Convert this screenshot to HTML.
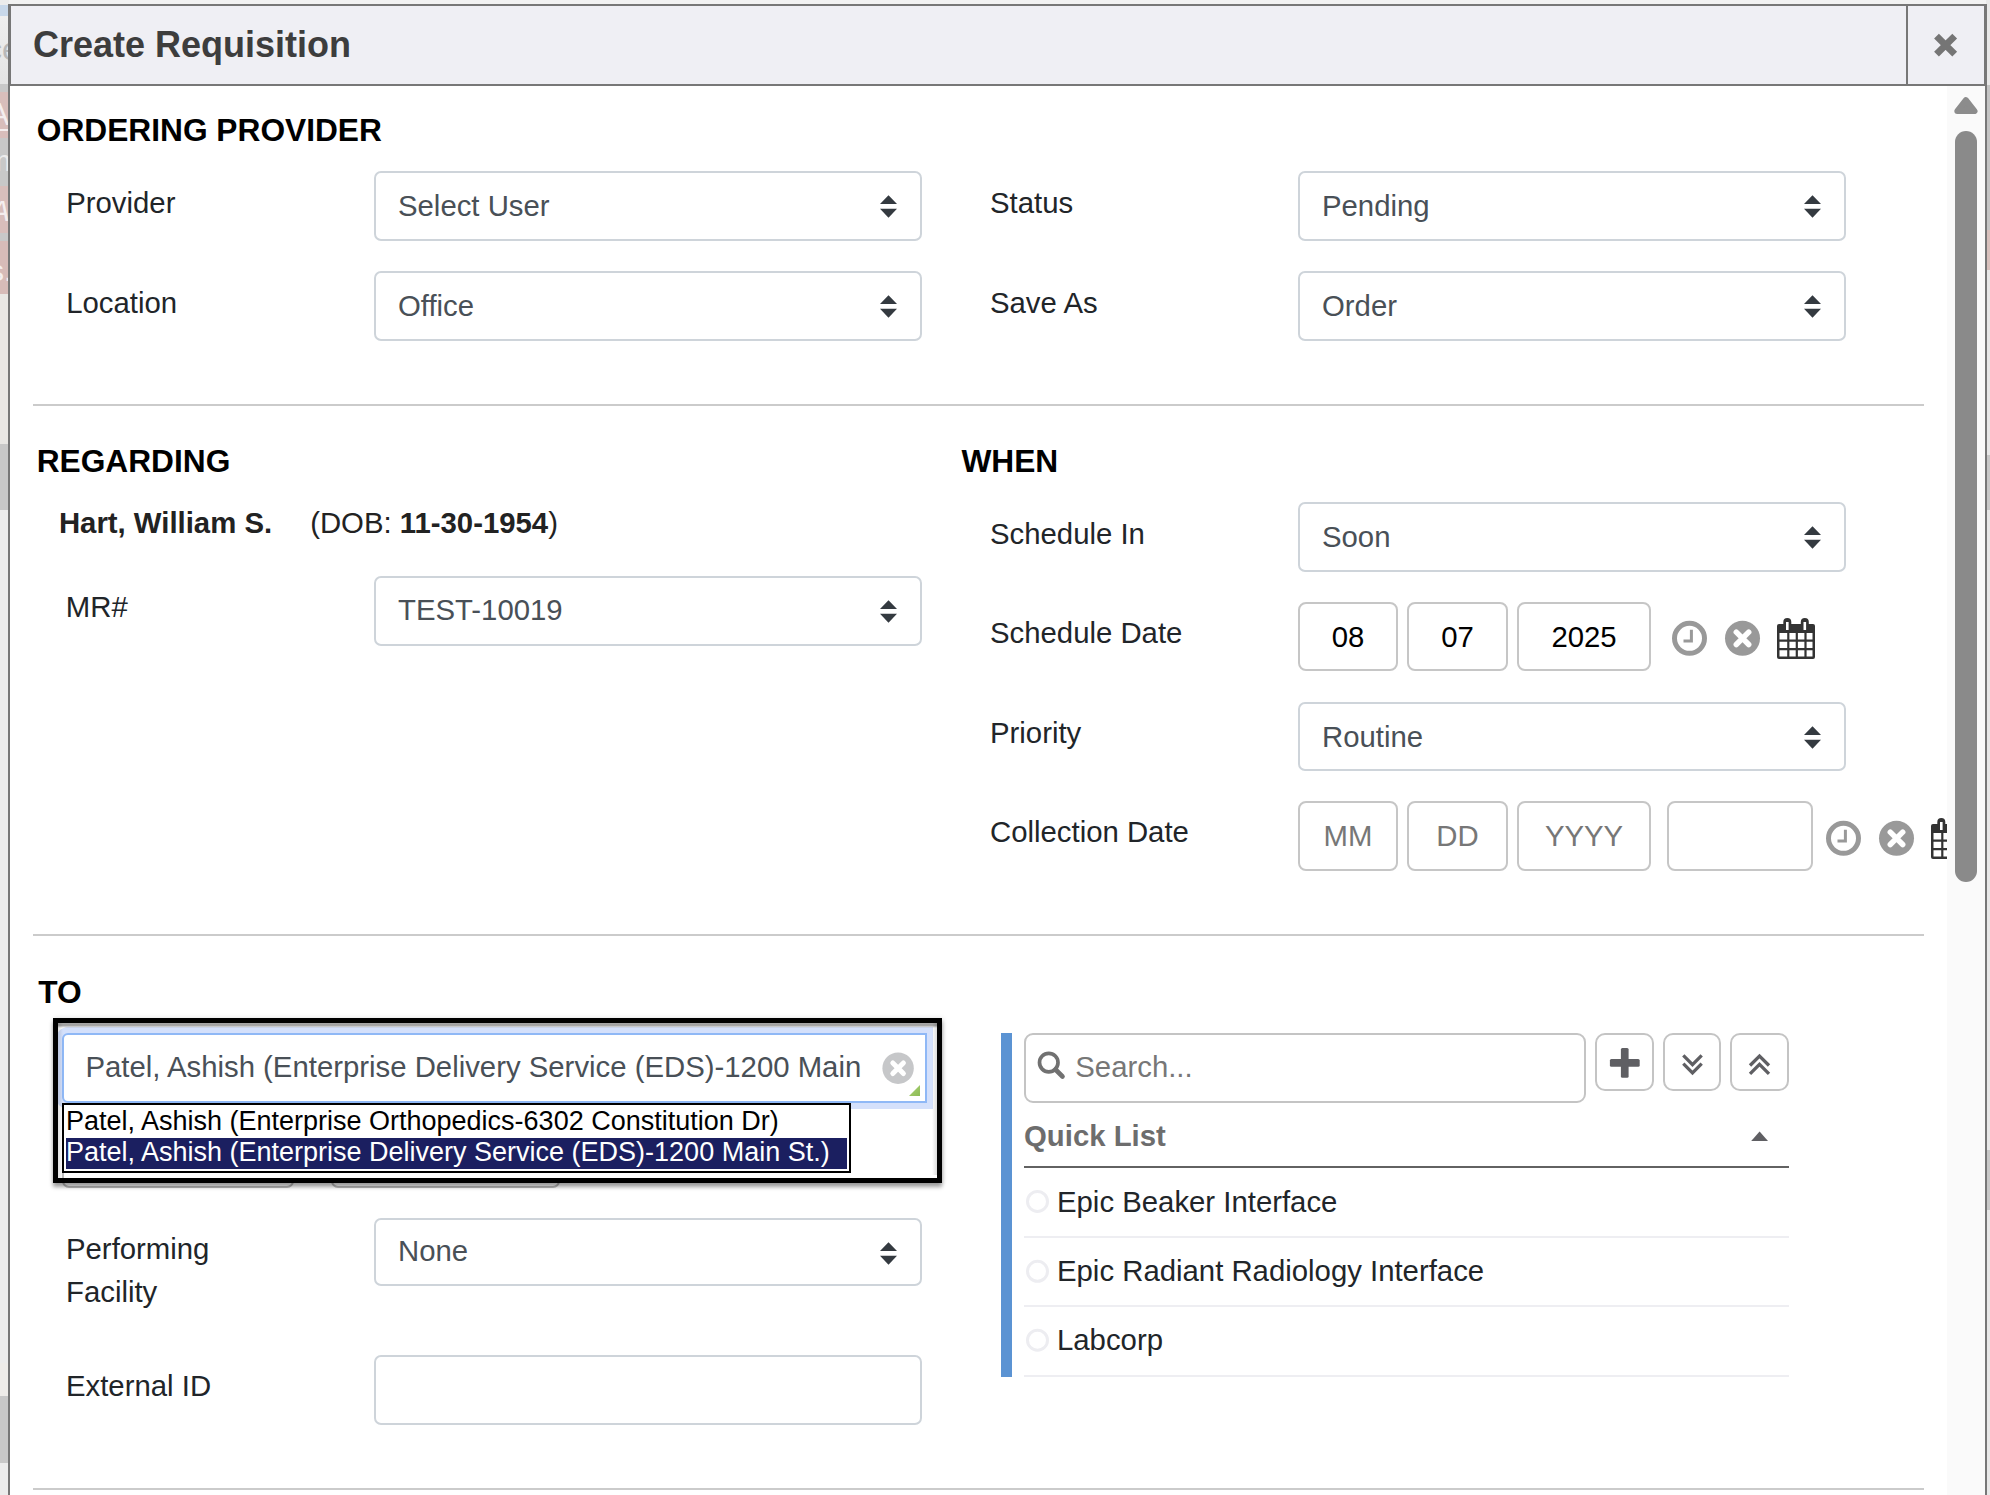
<!DOCTYPE html>
<html><head><meta charset="utf-8">
<style>
*{box-sizing:border-box;margin:0;padding:0}
html,body{width:1990px;height:1495px;overflow:hidden;background:#f2f2f2;font-family:"Liberation Sans",sans-serif}
.a{position:absolute}
.t{position:absolute;line-height:1;white-space:nowrap}
.lbl{font-size:29.33px;color:#212529}
.h{font-size:31.7px;font-weight:bold;color:#000}
.sel{position:absolute;border:2px solid #ced4da;border-radius:7px;background:#fff}
.sel .v{position:absolute;left:22px;font-size:29.33px;color:#495057;line-height:1;white-space:nowrap}
.sel .arr{position:absolute;right:22.6px;top:22.1px}
.db{position:absolute;border:2px solid #c6c6c6;border-radius:8px;background:#fff;font-size:29.33px;line-height:1;text-align:center}
.hr{position:absolute;left:33px;width:1891px;height:2px;background:#cbcbcb}
</style></head><body>
<!-- background strip left -->
<div class="a" style="left:0;top:0;width:9px;height:1495px;background:#ececec"></div>
<div class="a" style="left:0;top:5px;width:9px;height:11px;background:#c8d8ea"></div>
<div class="a" style="left:0;top:16px;width:9px;height:68px;background:linear-gradient(#efefef,#e4e4e4)"></div>
<div class="a" style="left:0;top:84px;width:9px;height:210px;background:#c8c8c8"></div>
<div class="a" style="left:0;top:92px;width:9px;height:46px;background:#d8bebb"></div>
<div class="a" style="left:0;top:186px;width:9px;height:47px;background:#d8bebb"></div>
<div class="a" style="left:0;top:241px;width:9px;height:53px;background:#d7bbb8"></div>
<div class="a" style="left:0;top:294px;width:9px;height:150px;background:#e9e7e4"></div>
<div class="a" style="left:0;top:444px;width:9px;height:66px;background:#c8c8c8"></div>
<div class="a" style="left:0;top:1363px;width:9px;height:33px;background:#eeece9"></div>
<div class="a" style="left:0;top:1396px;width:9px;height:67px;background:#c8c8c8"></div>
<div class="a" style="left:0;top:0;width:9px;height:300px;overflow:hidden">
 <div class="t" style="left:-14px;top:33px;font-size:32px;color:#b9b9b9">ce</div>
 <div class="t" style="left:-12px;top:98px;font-size:32px;color:#f4eeee">A</div>
 <div class="a" style="left:0;top:129px;width:9px;height:2px;background:#f4eeee"></div>
 <div class="t" style="left:-14px;top:146px;font-size:30px;color:#ececec">m</div>
 <div class="t" style="left:-10px;top:196px;font-size:30px;font-style:italic;color:#f4eeee">A</div>
 <div class="t" style="left:-11px;top:256px;font-size:30px;color:#f4eeee">s.</div>
</div>
<div class="a" style="left:1986px;top:0;width:4px;height:1495px;background:#e8e8e8"></div>
<div class="a" style="left:1986px;top:85px;width:4px;height:145px;background:#c4c4c4"></div>
<div class="a" style="left:1986px;top:230px;width:4px;height:40px;background:#d8c0bc"></div>
<div class="a" style="left:1986px;top:455px;width:4px;height:55px;background:#c8c8c8"></div>
<div class="a" style="left:1986px;top:1150px;width:4px;height:60px;background:#c8c8c8"></div>

<!-- modal -->
<div class="a" style="left:8px;top:4px;width:1979px;height:1600px;border:2px solid #777;background:#fff"></div>
<div class="a" style="left:9px;top:4px;width:1977px;height:82px;border:2px solid #777;background:#efeff4"></div>
<div class="a" style="left:1906px;top:4px;width:2px;height:82px;background:#777"></div>
<div class="t" style="left:33px;top:27.3px;font-size:36px;font-weight:bold;color:#3d3d3d">Create Requisition</div>
<svg class="a" style="left:1932px;top:32px" width="28" height="28" viewBox="0 0 28 28"><path d="M4.5 4.1L22.7 22.2M22.7 4.1L4.5 22.2" stroke="#757575" stroke-width="6.8" stroke-linecap="butt"/></svg>

<!-- scrollbar -->
<div class="a" style="left:1947px;top:86px;width:38px;height:1409px;background:#fafafa"></div>
<svg class="a" style="left:1952px;top:95px" width="28" height="22" viewBox="0 0 28 22"><path d="M13.9 5.2L22.5 16.1H5.3Z" fill="#8c8c8c" stroke="#8c8c8c" stroke-width="6" stroke-linejoin="round"/></svg>
<div class="a" style="left:1955px;top:131px;width:22px;height:751px;border-radius:11px;background:#8a8a8a"></div>

<!-- ORDERING PROVIDER -->
<div class="t h" style="left:36.8px;top:115.3px">ORDERING PROVIDER</div>
<div class="t lbl" style="left:66.2px;top:188px">Provider</div>
<div class="sel" style="left:374px;top:171px;width:548px;height:70px"><div class="v" style="top:17.7px">Select User</div><svg class="arr" width="17" height="23" viewBox="0 0 17 23"><path d="M8.5 0.3L17 9.1H0ZM0 13.8H17L8.5 22.8Z" fill="#343a40"/></svg></div>
<div class="t lbl" style="left:66.2px;top:287.5px">Location</div>
<div class="sel" style="left:374px;top:271px;width:548px;height:70px"><div class="v" style="top:17.7px">Office</div><svg class="arr" width="17" height="23" viewBox="0 0 17 23"><path d="M8.5 0.3L17 9.1H0ZM0 13.8H17L8.5 22.8Z" fill="#343a40"/></svg></div>
<div class="t lbl" style="left:990px;top:188px">Status</div>
<div class="sel" style="left:1298px;top:171px;width:548px;height:70px"><div class="v" style="top:17.7px">Pending</div><svg class="arr" width="17" height="23" viewBox="0 0 17 23"><path d="M8.5 0.3L17 9.1H0ZM0 13.8H17L8.5 22.8Z" fill="#343a40"/></svg></div>
<div class="t lbl" style="left:990px;top:287.5px">Save As</div>
<div class="sel" style="left:1298px;top:271px;width:548px;height:70px"><div class="v" style="top:17.7px">Order</div><svg class="arr" width="17" height="23" viewBox="0 0 17 23"><path d="M8.5 0.3L17 9.1H0ZM0 13.8H17L8.5 22.8Z" fill="#343a40"/></svg></div>
<div class="hr" style="top:404px"></div>

<!-- REGARDING -->
<div class="t h" style="left:36.7px;top:446px">REGARDING</div>
<div class="t lbl" style="left:58.9px;top:508px;color:#222"><b>Hart, William S.</b><span style="display:inline-block;width:38px"></span>(DOB: <b>11-30-1954</b>)</div>
<div class="t lbl" style="left:65.8px;top:591.5px">MR#</div>
<div class="sel" style="left:374px;top:576px;width:548px;height:70px"><div class="v" style="top:16.9px">TEST-10019</div><svg class="arr" width="17" height="23" viewBox="0 0 17 23"><path d="M8.5 0.3L17 9.1H0ZM0 13.8H17L8.5 22.8Z" fill="#343a40"/></svg></div>

<!-- WHEN -->
<div class="t h" style="left:961.4px;top:446px">WHEN</div>
<div class="t lbl" style="left:990px;top:519.4px">Schedule In</div>
<div class="sel" style="left:1298px;top:502px;width:548px;height:70px"><div class="v" style="top:17.7px">Soon</div><svg class="arr" width="17" height="23" viewBox="0 0 17 23"><path d="M8.5 0.3L17 9.1H0ZM0 13.8H17L8.5 22.8Z" fill="#343a40"/></svg></div>
<div class="t lbl" style="left:990px;top:617.8px">Schedule Date</div>
<div class="db" style="left:1298px;top:602px;width:100px;height:69px;padding-top:18px;color:#000">08</div>
<div class="db" style="left:1407px;top:602px;width:101px;height:69px;padding-top:18px;color:#000">07</div>
<div class="db" style="left:1517px;top:602px;width:134px;height:69px;padding-top:18px;color:#000">2025</div>
<div class="t lbl" style="left:990px;top:718.2px">Priority</div>
<div class="sel" style="left:1298px;top:702px;width:548px;height:69px"><div class="v" style="top:17.7px">Routine</div><svg class="arr" width="17" height="23" viewBox="0 0 17 23"><path d="M8.5 0.3L17 9.1H0ZM0 13.8H17L8.5 22.8Z" fill="#343a40"/></svg></div>
<div class="t lbl" style="left:990px;top:816.9px">Collection Date</div>
<div class="db" style="left:1298px;top:801px;width:100px;height:70px;padding-top:18px;color:#777">MM</div>
<div class="db" style="left:1407px;top:801px;width:101px;height:70px;padding-top:18px;color:#777">DD</div>
<div class="db" style="left:1517px;top:801px;width:134px;height:70px;padding-top:18px;color:#777">YYYY</div>
<div class="db" style="left:1667px;top:801px;width:146px;height:70px"></div>
<!-- date icons -->
<svg class="a" style="left:1670px;top:619px" width="40" height="40" viewBox="0 0 40 40"><circle cx="19.5" cy="19.3" r="15" fill="none" stroke="#999" stroke-width="5"/><path d="M21.4 10.8V21.9H13.5" fill="none" stroke="#999" stroke-width="3"/></svg>
<svg class="a" style="left:1723px;top:619px" width="40" height="40" viewBox="0 0 40 40"><circle cx="19.5" cy="19.3" r="17.5" fill="#999"/><path d="M13.3 13.1L25.7 25.5M25.7 13.1L13.3 25.5" stroke="#fff" stroke-width="5.5" stroke-linecap="round"/></svg>
<svg class="a" style="left:1776px;top:617px" width="40" height="44" viewBox="0 0 40 44"><rect x="1" y="7" width="38" height="35" rx="2" fill="#333"/><rect x="3.5" y="16" width="33" height="23.5" fill="#fff"/><path d="M12.3 15V40M20.8 15V40M29.5 15V40M3 23.6H37M3 32.2H37" stroke="#333" stroke-width="2.2"/><rect x="7.3" y="1" width="8" height="14" rx="4" fill="#333"/><rect x="24.8" y="1" width="8" height="14" rx="4" fill="#333"/><rect x="10" y="5" width="2.6" height="8" fill="#fff"/><rect x="27.5" y="5" width="2.6" height="8" fill="#fff"/></svg>
<svg class="a" style="left:1824px;top:819px" width="40" height="40" viewBox="0 0 40 40"><circle cx="19.5" cy="19.3" r="15" fill="none" stroke="#999" stroke-width="5"/><path d="M21.4 10.8V21.9H13.5" fill="none" stroke="#999" stroke-width="3"/></svg>
<svg class="a" style="left:1877px;top:819px" width="40" height="40" viewBox="0 0 40 40"><circle cx="19.5" cy="19.3" r="17.5" fill="#999"/><path d="M13.3 13.1L25.7 25.5M25.7 13.1L13.3 25.5" stroke="#fff" stroke-width="5.5" stroke-linecap="round"/></svg>
<div class="a" style="left:1930px;top:817px;width:17px;height:46px;overflow:hidden"><svg style="position:absolute;left:0;top:0" width="40" height="44" viewBox="0 0 40 44"><rect x="1" y="7" width="38" height="35" rx="2" fill="#333"/><rect x="3.5" y="16" width="33" height="23.5" fill="#fff"/><path d="M12.3 15V40M20.8 15V40M29.5 15V40M3 23.6H37M3 32.2H37" stroke="#333" stroke-width="2.2"/><rect x="7.3" y="1" width="8" height="14" rx="4" fill="#333"/><rect x="10" y="5" width="2.6" height="8" fill="#fff"/></svg></div>
<div class="hr" style="top:934px"></div>

<!-- TO -->
<div class="t h" style="left:38.3px;top:977px">TO</div>
<div class="t lbl" style="left:66px;top:1234px">Performing</div>
<div class="t lbl" style="left:66px;top:1277px">Facility</div>
<div class="sel" style="left:374px;top:1218px;width:548px;height:68px"><div class="v" style="top:15.9px">None</div><svg class="arr" width="17" height="23" viewBox="0 0 17 23"><path d="M8.5 0.3L17 9.1H0ZM0 13.8H17L8.5 22.8Z" fill="#343a40"/></svg></div>
<div class="t lbl" style="left:66px;top:1370.5px">External ID</div>
<div class="sel" style="left:374px;top:1355px;width:548px;height:70px"></div>
<div class="hr" style="top:1488px"></div>

<!-- right TO panel -->
<div class="a" style="left:1001px;top:1033px;width:11px;height:344px;background:#5b93d3"></div>
<div class="a" style="left:1024px;top:1033px;width:562px;height:70px;border:2px solid #c4c4c4;border-radius:9px;background:#fff"></div>
<div class="t" style="left:1075.3px;top:1051.7px;font-size:29.33px;color:#777">Search...</div>
<div class="a" style="left:1595px;top:1033px;width:59px;height:58px;border:2px solid #c4c4c4;border-radius:10px"></div>
<div class="a" style="left:1663px;top:1033px;width:58px;height:58px;border:2px solid #c4c4c4;border-radius:10px"></div>
<div class="a" style="left:1730px;top:1033px;width:59px;height:58px;border:2px solid #c4c4c4;border-radius:10px"></div>
<svg class="a" style="left:1034px;top:1048px" width="34" height="34" viewBox="0 0 34 34"><circle cx="14.75" cy="14.55" r="9.25" fill="none" stroke="#717171" stroke-width="3.7"/><path d="M21.5 21.5L28.5 28.5" stroke="#717171" stroke-width="4.6" stroke-linecap="round"/></svg>
<svg class="a" style="left:1595px;top:1033px" width="59" height="58" viewBox="0 0 59 58"><rect x="14.9" y="26" width="29.8" height="7.8" rx="1.5" fill="#5f5f63"/><rect x="25.9" y="15" width="7.7" height="29.8" rx="1.5" fill="#5f5f63"/></svg>
<svg class="a" style="left:1663px;top:1033px" width="58" height="58" viewBox="0 0 58 58"><path d="M20.3 22.4L29.5 31.6L38.7 22.4M20.3 30.6L29.5 39.8L38.7 30.6" fill="none" stroke="#5f5f63" stroke-width="3.3"/></svg>
<svg class="a" style="left:1730px;top:1033px" width="59" height="58" viewBox="0 0 59 58"><path d="M20 32.5L29.5 23L39 32.5M20 40.9L29.5 31.4L39 40.9" fill="none" stroke="#5f5f63" stroke-width="3.3"/></svg>
<svg class="a" style="left:1750px;top:1130px" width="20" height="12" viewBox="0 0 20 12"><path d="M9.6 1.5L18 10.9H1.2Z" fill="#5f5f63"/></svg>
<svg class="a" style="left:1024px;top:1189px" width="28" height="168" viewBox="0 0 28 168"><g fill="none" stroke="#ededf1" stroke-width="3"><circle cx="13.5" cy="12.4" r="10"/><circle cx="13.5" cy="82.3" r="10"/><circle cx="13.5" cy="151.2" r="10"/></g></svg>
<div class="t" style="left:1024px;top:1121.4px;font-size:29.33px;font-weight:bold;color:#6d6d6d">Quick List</div>
<div class="a" style="left:1024px;top:1166px;width:765px;height:2px;background:#626262"></div>
<div class="a" style="left:1024px;top:1236px;width:765px;height:2px;background:#eeeef2"></div>
<div class="a" style="left:1024px;top:1305px;width:765px;height:2px;background:#eeeef2"></div>
<div class="a" style="left:1024px;top:1375px;width:765px;height:2px;background:#eeeef2"></div>
<div class="t lbl" style="left:1057px;top:1186.6px">Epic Beaker Interface</div>
<div class="t lbl" style="left:1057px;top:1255.6px">Epic Radiant Radiology Interface</div>
<div class="t lbl" style="left:1057px;top:1325.2px">Labcorp</div>
<!-- TO overlay (dropdown callout) -->
<div class="a" style="left:62px;top:1120px;width:232px;height:68px;border:2px solid #b8b8b8;border-radius:7px"></div>
<div class="a" style="left:331px;top:1120px;width:229px;height:68px;border:2px solid #b8b8b8;border-radius:7px"></div>
<div class="a" style="left:53px;top:1018px;width:889px;height:165px;background:#000;box-shadow:0 4px 4px rgba(0,0,0,.36),1px 0 5px rgba(0,0,0,.12)"></div>
<div class="a" style="left:58px;top:1023px;width:879px;height:155px;background:#fff;overflow:hidden">
  <div class="a" style="left:4px;top:10px;width:865px;height:70px;border:2px solid #8fb8f6;border-radius:6px 0 0 6px;background:#fff;box-shadow:0 0 0 6px #d4e0fb"></div>
  <div class="t" style="left:27.4px;top:28.5px;font-size:29.33px;color:#495057">Patel, Ashish (Enterprise Delivery Service (EDS)-1200 Main</div>
  <svg class="a" style="left:822px;top:27px" width="36" height="36" viewBox="0 0 36 36"><circle cx="18.1" cy="18.2" r="15.7" fill="#c6c7c9"/><path d="M12.8 12.9L23.4 23.5M23.4 12.9L12.8 23.5" stroke="#fff" stroke-width="5" stroke-linecap="round"/></svg>
  <svg class="a" style="left:851px;top:61px" width="12" height="12" viewBox="0 0 12 12"><defs><linearGradient id="g" x1="0" y1="0" x2="1" y2="1"><stop offset="0" stop-color="#d6e9c0"/><stop offset=".5" stop-color="#9cc766"/><stop offset="1" stop-color="#8dbb55"/></linearGradient></defs><path d="M11 1V12H0Z" fill="url(#g)"/></svg>
  <div class="a" style="left:0;top:0;width:879px;height:5px;background:linear-gradient(#a8a8a8,#9e9e9e 45%,rgba(150,150,150,.35) 80%,rgba(160,160,160,0))"></div>
  <div class="a" style="left:0;top:0;width:5px;height:155px;background:linear-gradient(90deg,rgba(0,0,0,.12),rgba(0,0,0,0))"></div>
  <div class="a" style="left:874px;top:0;width:5px;height:152px;background:linear-gradient(90deg,rgba(0,0,0,0),rgba(0,0,0,.14))"></div>
  <div class="a" style="left:4px;top:80px;width:789px;height:70px;border:2px solid #000;background:#fff"></div>
  <div class="a" style="left:4px;top:150px;width:2px;height:5px;background:#bdbdbd"></div>
  <div class="a" style="left:8px;top:115px;width:781px;height:30.6px;background:#1b1f60"></div>
  <div class="t" style="left:7.9px;top:85px;font-size:27px;color:#000">Patel, Ashish (Enterprise Orthopedics-6302 Constitution Dr)</div>
  <div class="t" style="left:7.9px;top:116px;font-size:27px;color:#fff">Patel, Ashish (Enterprise Delivery Service (EDS)-1200 Main St.)</div>
</div>
</body></html>
